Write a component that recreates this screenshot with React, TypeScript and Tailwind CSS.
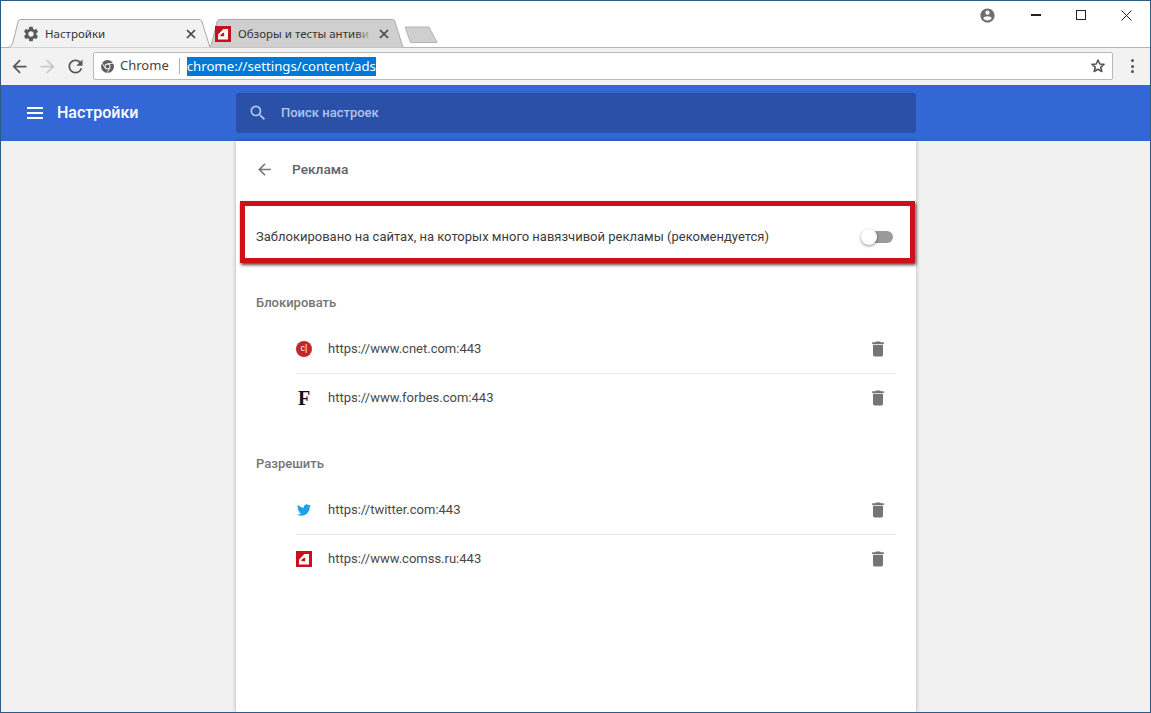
import React from "react";

const M = ({ d, size, fill, className }: { d: string; size: number; fill: string; className?: string }) => (
  <svg width={size} height={size} viewBox="0 0 24 24" fill={fill} className={className}>
    <path d={d} />
  </svg>
);

const TRASH = "M6 19c0 1.1.9 2 2 2h8c1.1 0 2-.9 2-2V7H6v12zM19 4h-3.5l-1-1h-5l-1 1H5v2h14V4z";
const GEAR =
  "M19.14 12.94c.04-.3.06-.61.06-.94 0-.32-.02-.64-.07-.94l2.03-1.58c.18-.14.23-.41.12-.61l-1.92-3.32c-.12-.22-.37-.29-.59-.22l-2.39.96c-.5-.38-1.03-.7-1.62-.94l-.36-2.54c-.04-.24-.24-.41-.48-.41h-3.84c-.24 0-.43.17-.47.41l-.36 2.54c-.59.24-1.13.57-1.62.94l-2.39-.96c-.22-.08-.47 0-.59.22L2.74 8.87c-.12.21-.08.47.12.61l2.03 1.58c-.05.3-.09.63-.09.94s.02.64.07.94l-2.03 1.58c-.18.14-.23.41-.12.61l1.92 3.32c.12.22.37.29.59.22l2.39-.96c.5.38 1.03.7 1.62.94l.36 2.54c.05.24.24.41.48.41h3.84c.24 0 .44-.17.47-.41l.36-2.54c.59-.24 1.13-.56 1.62-.94l2.39.96c.22.08.47 0 .59-.22l1.92-3.32c.12-.22.07-.47-.12-.61l-2.01-1.58zM12 15.6c-1.98 0-3.6-1.62-3.6-3.6s1.62-3.6 3.6-3.6 3.6 1.62 3.6 3.6-1.62 3.6-3.6 3.6z";
const ARROW = "M20 11H7.83l5.59-5.59L12 4l-8 8 8 8 1.41-1.41L7.83 13H20v-2z";
const TWITTER =
  "M23.95 4.57a10 10 0 0 1-2.82.77 4.96 4.96 0 0 0 2.16-2.72c-.95.55-2 .95-3.12 1.18a4.92 4.92 0 0 0-8.38 4.48C7.69 8.1 4.07 6.13 1.64 3.16a4.82 4.82 0 0 0-.67 2.48c0 1.71.87 3.21 2.19 4.1a4.9 4.9 0 0 1-2.23-.61v.06a4.92 4.92 0 0 0 3.95 4.83 5 5 0 0 1-2.21.08 4.94 4.94 0 0 0 4.6 3.42A9.87 9.87 0 0 1 0 19.54a14 14 0 0 0 7.56 2.21c9.05 0 14-7.5 14-13.98 0-.21 0-.42-.02-.63a9.94 9.94 0 0 0 2.46-2.55z";

const Comss = ({ size }: { size: number }) => (
  <svg width={size} height={size} viewBox="0 0 16 16">
    <rect width="16" height="16" fill="#c8101e" />
    <path d="M3 8.500 8.500 3H13v10.500H3z" fill="#fff" />
    <path d="M5.500 8.800 8 6.800h1.200v3.400H5.500z" fill="#c8101e" />
  </svg>
);

const Cnet = () => (
  <span className="flex h-4 w-4 items-center justify-center rounded-full bg-[#c1272d] font-['Liberation_Sans',sans-serif] text-[9px] leading-none text-white">
    c|
  </span>
);

const Forbes = () => (
  <span className="font-['Liberation_Serif',serif] text-[20px] font-bold leading-none text-[#111]">F</span>
);

const Twitter = () => <M d={TWITTER} size={14} fill="#1da1e2" />;

const Row = ({ icon, url, divider }: { icon: React.ReactNode; url: string; divider?: boolean }) => (
  <div className={`ml-[60px] mr-5 flex h-[49px] items-center ${divider ? "border-t border-[#e9e9e9]" : ""}`}>
    <span className="flex w-4 items-center justify-center">{icon}</span>
    <span className="ml-4 flex-1 text-[13px] text-[#484848]">{url}</span>
    <M d={TRASH} size={20} fill="#757575" className="mr-2" />
  </div>
);

const Tab = ({
  width,
  active,
  title,
  icon,
  overlap,
}: {
  width: number;
  active?: boolean;
  title: string;
  icon: React.ReactNode;
  overlap?: boolean;
}) => (
  <div
    className={`relative flex h-7 shrink-0 items-center pt-[1px] font-['Noto_Sans',sans-serif] text-[11.500px] text-[#333] ${
      active ? "z-10" : "-ml-[7px]"
    }`}
    style={{ width }}
  >
    <svg
      className="absolute inset-0"
      width={width}
      height={29}
      viewBox={`0 0 ${width} 29`}
      fill={active ? "#f2f2f2" : "#cfcfcf"}
      stroke="#a9a9a9"
    >
      <path d={`M0.5 28.5 C4 28 5 26 6 23 L11 3 C11.6 1 12.5 0.5 14 0.5 H${width - 14} C${width - 12.5} 0.5 ${width - 11.6} 1 ${width - 11} 3 L${width - 3} 28.5`} />
    </svg>
    <span className={`relative flex items-center ${overlap ? "ml-[9px]" : "ml-[15px]"}`}>{icon}</span>
    <span className={`relative overflow-hidden whitespace-nowrap ${overlap ? "ml-[7px] w-[134px]" : "ml-[5px] flex-1"}`}>
      {title}
      {overlap && <span className="absolute inset-y-0 right-0 w-4 bg-gradient-to-r from-transparent to-[#cfcfcf]" />}
    </span>
    <svg className={`relative ${overlap ? "ml-[7px]" : "mr-[17px]"}`} width="10" height="10" viewBox="0 0 10 10" stroke="#444" strokeWidth="1.7">
      <path d="M1 1l8 8M9 1 1 9" />
    </svg>
  </div>
);

export default function App() {
  return (
    <div className="flex h-[713px] w-[1151px] flex-col overflow-hidden border border-[#2b5b84] bg-[#f1f1f1] font-['Roboto',sans-serif]">
      {/* title strip */}
      <div className="flex h-[46px] shrink-0 justify-between bg-white">
        <div className="flex items-end pl-[6px]">
          <Tab
            width={206}
            active
            title="Настройки"
            icon={<M d={GEAR} size={18} fill="#5a5a5a" />}
          />
          <Tab width={200} overlap title="Обзоры и тесты антиви" icon={<Comss size={16} />} />
          <svg className="mb-[3px] -ml-[3px]" width="36" height="18" viewBox="0 0 36 18" fill="#cfcfcf" stroke="#b5b5b5">
            <path d="M2 1h24l8 15.500H7.500z" strokeLinejoin="round" />
          </svg>
        </div>
        <div className="flex h-[28px] items-center">
          <M d="M12 2C6.48 2 2 6.48 2 12s4.48 10 10 10 10-4.480 10-10S17.520 2 12 2zm0 3a3 3 0 1 1 0 6 3 3 0 0 1 0-6zm0 14.200a7.200 7.200 0 0 1-6-3.220c.03-1.990 4-3.080 6-3.080s5.970 1.090 6 3.080a7.200 7.200 0 0 1-6 3.220z" size={17} fill="#6e6e6e" />
          <span className="ml-[35px] h-[2px] w-[10px] bg-[#222]" />
          <span className="ml-[35px] h-[10px] w-[10px] border border-[#222]" />
          <svg className="ml-[35px] mr-[18px]" width="11" height="11" viewBox="0 0 11 11" stroke="#222" strokeWidth="1">
            <path d="M.5.5l10 10M10.500.5l-10 10" />
          </svg>
        </div>
      </div>

      {/* toolbar */}
      <div className="flex h-[38px] shrink-0 items-start border-t border-[#b4b4b4] bg-[#f2f2f2] pl-[8px] pr-[10px] pt-[4px]">
        <div className="flex h-[28px] items-center">
          <M d={ARROW} size={21} fill="#5a5a5a" />
          <M d={ARROW} size={21} fill="#c8c8c8" className="ml-[7px] rotate-180" />
          <M
            d="M17.650 6.350A7.958 7.958 0 0 0 12 4c-4.420 0-7.990 3.580-7.990 8s3.570 8 7.990 8c3.730 0 6.840-2.550 7.730-6h-2.080A5.990 5.990 0 0 1 12 18c-3.310 0-6-2.690-6-6s2.690-6 6-6c1.660 0 3.140.690 4.220 1.780L13 11h7V4l-2.350 2.350z"
            size={21}
            fill="#5a5a5a"
            className="ml-[7px]"
          />
        </div>
        <div className="ml-[7px] flex h-[28px] flex-1 items-center rounded-[2px] border border-[#b9b9b9] bg-white pl-[7px] pr-[5px]">
          <svg width="13" height="13" viewBox="0 0 24 24">
            <circle cx="12" cy="12" r="12" fill="#5f5f5f" />
            <circle cx="12" cy="12" r="5.500" fill="#fff" />
            <circle cx="12" cy="12" r="3.800" fill="#5f5f5f" />
            <path d="M12 6.500h11M7.500 15 2 5.500M16.500 15 11 24" stroke="#fff" strokeWidth="1.500" />
          </svg>
          <span className="ml-[6px] font-['Noto_Sans',sans-serif] text-[13px] text-[#444]">Chrome</span>
          <span className="ml-[10px] h-[16px] w-px bg-[#b0b0b0]" />
          <span className="ml-[7px] bg-[#0078d7] font-['Noto_Sans',sans-serif] text-[13.200px] leading-[19px] text-white">
            chrome://settings/content/ads
          </span>
          <span className="flex-1" />
          <svg className="mr-px" width="16" height="16" viewBox="0 0 24 24" fill="none" stroke="#555" strokeWidth="2.400" strokeLinejoin="round">
            <path d="M12 3l2.700 6 6.300.600-4.800 4.200 1.500 6.400L12 16.800 6.300 20.200l1.500-6.400L3 9.600 9.300 9z" />
          </svg>
        </div>
        <div className="ml-[18px] mr-[6px] flex h-[28px] flex-col justify-center gap-[2.500px]">
          <span className="h-[3px] w-[3px] rounded-full bg-[#555]" />
          <span className="h-[3px] w-[3px] rounded-full bg-[#555]" />
          <span className="h-[3px] w-[3px] rounded-full bg-[#555]" />
        </div>
      </div>

      {/* blue header */}
      <div className="flex h-[56px] shrink-0 items-center bg-[#3367d6]">
        <div className="flex w-[235px] items-center pl-[26px] text-white">
          <span className="flex w-4 flex-col gap-[3px]">
            <span className="h-[2px] bg-white" />
            <span className="h-[2px] bg-white" />
            <span className="h-[2px] bg-white" />
          </span>
          <span className="ml-[14px] text-[16px] font-medium">Настройки</span>
        </div>
        <div className="flex h-[40px] w-[680px] items-center rounded-[2px] bg-[#2a50a8] pl-[12px]">
          <M
            d="M15.500 14h-.790l-.280-.270A6.471 6.471 0 0 0 16 9.500 6.500 6.500 0 1 0 9.500 16c1.610 0 3.090-.590 4.230-1.570l.270.280v.790l5 4.990L20.490 19l-4.990-5zm-6 0C7.010 14 5 11.990 5 9.500S7.010 5 9.500 5 14 7.010 14 9.500 11.990 14 9.500 14z"
            size={20}
            fill="#b8c8ee"
          />
          <span className="ml-[13px] text-[13px] font-medium text-[#b3c4ec]">Поиск настроек</span>
        </div>
      </div>

      {/* content */}
      <div className="min-h-0 flex-1">
        <div className="ml-[235px] h-full w-[680px] bg-white shadow-[0_0_4px_rgba(0,0,0,0.3)]">
          <div className="flex h-[56px] items-center pl-[19px]">
            <M d={ARROW} size={19} fill="#757575" />
            <span className="ml-[18px] text-[13.700px] font-medium text-[#5f6368]">Реклама</span>
          </div>
          <div className="ml-[4px] mr-px mt-[4px] flex h-[62px] items-center border-[5px] border-[#cf1018] pl-[11px] pr-[17px] pt-[10px] shadow-[1px_2px_3px_rgba(40,0,0,0.75)]">
            <span className="flex-1 text-[13px] text-[#3c3c3c]">
              Заблокировано на сайтах, на которых много навязчивой рекламы (рекомендуется)
            </span>
            <span className="relative flex h-[12px] w-[24px] rounded-full bg-[#9a9a9a]">
              <span className="absolute -left-[8px] -top-[2px] h-4 w-4 rounded-full bg-white shadow-[0_1px_3px_rgba(0,0,0,0.45)]" />
            </span>
          </div>

          <div className="ml-5 mt-[32px] text-[13px] font-medium leading-4 text-[#757575]">Блокировать</div>
          <div className="mt-[13px]">
            <Row icon={<Cnet />} url="https://www.cnet.com:443" />
            <Row icon={<Forbes />} url="https://www.forbes.com:443" divider />
          </div>

          <div className="ml-5 mt-[34px] text-[13px] font-medium leading-4 text-[#757575]">Разрешить</div>
          <div className="mt-[13px]">
            <Row icon={<Twitter />} url="https://twitter.com:443" />
            <Row icon={<Comss size={16} />} url="https://www.comss.ru:443" divider />
          </div>
        </div>
      </div>
    </div>
  );
}
